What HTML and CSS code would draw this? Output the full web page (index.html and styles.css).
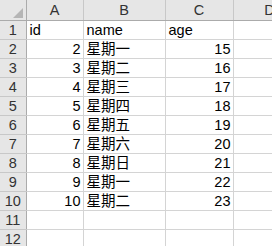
FILE: index.html
```html
<!DOCTYPE html>
<html>
<head>
<meta charset="utf-8">
<link rel="stylesheet" href="styles.css">
</head>
<body>
<div class="frame">
<table class="sheet">
  <colgroup>
    <col class="c-rh"><col class="c-a"><col class="c-b"><col class="c-c"><col class="c-d">
  </colgroup>
  <tr class="hdr">
    <th class="corner"><span class="tri"></span></th>
    <th class="colh">A</th><th class="colh">B</th><th class="colh">C</th><th class="colh">D</th>
  </tr>
  <tr><th class="rowh">1</th><td>id</td><td>name</td><td>age</td><td></td></tr>
  <tr><th class="rowh">2</th><td class="num">2</td><td>星期一</td><td class="num">15</td><td></td></tr>
  <tr><th class="rowh">3</th><td class="num">3</td><td>星期二</td><td class="num">16</td><td></td></tr>
  <tr><th class="rowh">4</th><td class="num">4</td><td>星期三</td><td class="num">17</td><td></td></tr>
  <tr><th class="rowh">5</th><td class="num">5</td><td>星期四</td><td class="num">18</td><td></td></tr>
  <tr><th class="rowh">6</th><td class="num">6</td><td>星期五</td><td class="num">19</td><td></td></tr>
  <tr><th class="rowh">7</th><td class="num">7</td><td>星期六</td><td class="num">20</td><td></td></tr>
  <tr><th class="rowh">8</th><td class="num">8</td><td>星期日</td><td class="num">21</td><td></td></tr>
  <tr><th class="rowh">9</th><td class="num">9</td><td>星期一</td><td class="num">22</td><td></td></tr>
  <tr><th class="rowh">10</th><td class="num">10</td><td>星期二</td><td class="num">23</td><td></td></tr>
  <tr><th class="rowh">11</th><td></td><td></td><td></td><td></td></tr>
  <tr><th class="rowh">12</th><td></td><td></td><td></td><td></td></tr>
</table>
</div>
</body>
</html>
```
FILE: styles.css
```css
html, body {
  margin: 0;
  padding: 0;
  background: #ffffff;
  overflow: hidden;
}
.frame {
  width: 272px;
  height: 246px;
  overflow: hidden;
}
.sheet {
  border-collapse: collapse;
  table-layout: fixed;
  width: 306px;
  font-family: "Liberation Sans", "Noto Sans CJK SC", sans-serif;
  font-size: 14.5px;
  color: #000;
}
.c-rh { width: 26px; }
.c-a { width: 57px; }
.c-b { width: 82px; }
.c-c { width: 68px; }
.c-d { width: 73px; }
.sheet td, .sheet th {
  height: 18px;
  padding: 0 2px 0 3px;
  border: 1px solid #d4d4d4;
  border-top: none;
  border-left: none;
  vertical-align: bottom;
  line-height: 17px;
  white-space: nowrap;
  overflow: hidden;
  font-weight: normal;
}
.sheet .hdr th {
  height: 20px;
  background: #e6e6e6;
  border-right: 1px solid #c8c8c8;
  border-bottom: 1px solid #ababab;
  color: #333;
  vertical-align: middle;
  text-align: center;
  padding: 0;
  line-height: 20px;
}
.sheet .corner {
  position: relative;
  border-right: 1px solid #ababab !important;
}
.tri {
  position: absolute;
  right: 3px;
  bottom: 2px;
  width: 0;
  height: 0;
  border-left: 10px solid transparent;
  border-bottom: 10px solid #b5b5b5;
}
.sheet th.rowh {
  background: #e6e6e6;
  border-right: 1px solid #ababab;
  border-bottom: 1px solid #c8c8c8;
  color: #333;
  text-align: center;
  padding: 0;
  vertical-align: middle;
}
.sheet td.num { text-align: right; }
```
